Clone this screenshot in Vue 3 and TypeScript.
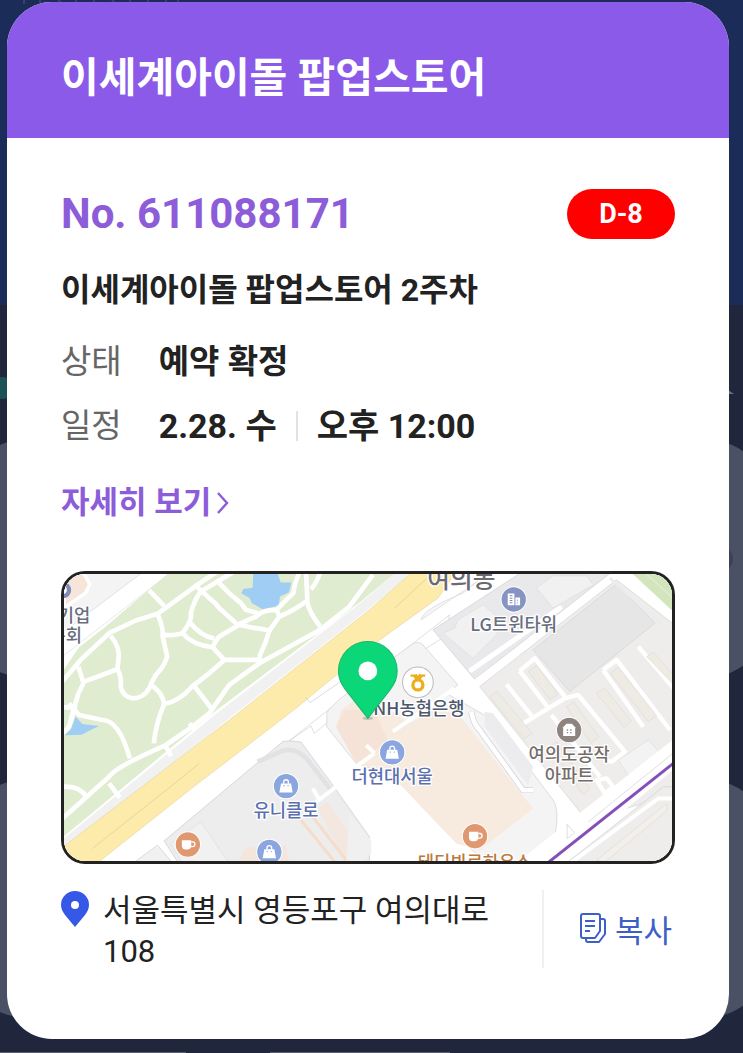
<script setup lang="ts">
interface Place {
  x: number
  y: number
  lines: string[]
  kind: 'office' | 'bank' | 'shop' | 'home' | 'food'
  icon: { x: number; y: number }
}

const reservation = {
  store: '이세계아이돌 팝업스토어',
  number: 'No. 611088171',
  dday: 'D-8',
  title: '이세계아이돌 팝업스토어 2주차',
  status: '예약 확정',
  date: '2.28. 수',
  time: '오후 12:00',
  address: '서울특별시 영등포구 여의대로 108',
}

const places: Place[] = [
  { x: 1392, y: 214, lines: ['LG트윈타워'], kind: 'office', icon: { x: 1392, y: 119 } },
  { x: 1108, y: 466, lines: ['NH농협은행'], kind: 'bank', icon: { x: 1105, y: 367 } },
  { x: 1028, y: 670, lines: ['더현대서울'], kind: 'shop', icon: { x: 1028, y: 577 } },
  { x: 710, y: 772, lines: ['유니클로'], kind: 'shop', icon: { x: 710, y: 678 } },
  { x: 660, y: 960, lines: [], kind: 'shop', icon: { x: 660, y: 875 } },
  { x: 416, y: 940, lines: [], kind: 'food', icon: { x: 416, y: 853 } },
  { x: 1558, y: 604, lines: ['여의도공작', '아파트'], kind: 'home', icon: { x: 1558, y: 510 } },
  { x: 1275, y: 925, lines: ['테디뵈르하우스'], kind: 'food', icon: { x: 1276, y: 828 } },
]

function copyAddress(): void {
  navigator.clipboard?.writeText(reservation.address)
}
</script>

<template>
  <div class="page">
    <svg class="backdrop" viewBox="0 0 743 1053" preserveAspectRatio="none" aria-hidden="true">
      <rect width="743" height="1053" fill="#20273d" />
      <rect width="743" height="305" fill="#1c2c59" />
      <path d="M24 0v4M40 0v3M58 0l4 3M76 0v3M94 0v4M112 0l3 3M130 0v3M148 0v3M166 0v4M178 0v3" stroke="#36426c" stroke-width="2" />
      <ellipse cx="0" cy="388" rx="20" ry="11" fill="#1d5158" />
      <path d="M728 390l6 4h-6z" fill="#6a7080" />
      <rect x="-36" y="440" width="804" height="237" rx="60" fill="#4b5164" />
      <rect x="-36" y="780" width="804" height="237" rx="60" fill="#4b5164" />
      <circle cx="720" cy="559" r="13" fill="#3c4158" />
      <path d="M0 1052h186v1H0zM270 1052h180v1H270z" fill="#5b6072" />
    </svg>

    <main class="card">
      <header class="card-head">
        <h1>{{ reservation.store }}</h1>
      </header>

      <div class="card-body">
        <div class="number-row">
          <p class="number">{{ reservation.number }}</p>
          <span class="badge">{{ reservation.dday }}</span>
        </div>

        <h2>{{ reservation.title }}</h2>

        <dl class="facts">
          <div class="fact">
            <dt>상태</dt>
            <dd>{{ reservation.status }}</dd>
          </div>
          <div class="fact">
            <dt>일정</dt>
            <dd class="schedule">
              <span>{{ reservation.date }}</span>
              <i class="bar"></i>
              <span>{{ reservation.time }}</span>
            </dd>
          </div>
        </dl>

        <a class="more" href="#detail">
          자세히 보기
          <svg width="12" height="24" viewBox="0 0 12 24" aria-hidden="true">
            <path d="M1 2l9 10-9 10" fill="none" stroke="currentColor" stroke-width="2.4" />
          </svg>
        </a>

        <div class="map">
          <svg viewBox="45 42 1821 861" preserveAspectRatio="xMidYMid slice" role="img" aria-label="지도">
            <rect x="0" y="0" width="1900" height="950" fill="#fff" />

            <!-- north-west block -->
            <path d="M0 0H330L45 215H0z" fill="#f4f4f5" stroke="#d4d4dc" stroke-width="2" />
            <path d="M72 41h32l18 32-12 26-64 44V70z" fill="#f8e5da" stroke="#fff" stroke-width="10" />
            <path d="M40 290L360 42" stroke="#dcdce2" stroke-width="2" />

            <!-- park -->
            <path d="M0 395L90 262 170 200 370 30H1050L930 128 500 452 0 865z" fill="#dfeccf" />
            <path d="M1050 30L930 132 500 462 0 872V905L540 475 960 145 1095 30z" fill="#f1f1f1" />
            <path d="M612 38h72l10 30h32l-8 30-26 12-4 28-48 10-32-18-8-16-24-14 6-12 28-4z" fill="#9fcdf3" />
            <path d="M80 470l20 22 50 6-30 14-22 12-50 2 18-18z" fill="#9fcdf3" />
            <g class="trails">
              <path d="M40 365L95 300 180 220 260 182 325 162 440 78 500 38" />
              <path d="M300 92L345 138" />
              <path d="M325 162Q345 210 340 228L354 290Q345 320 320 345 305 370 302 382 285 415 250 415 220 410 215 380 218 350 205 328" />
              <path d="M185 228Q215 265 208 300L205 328 105 365Q90 400 88 400L65 480" />
              <path d="M88 320L102 365" />
              <path d="M340 225Q380 228 400 220 430 180 425 160 435 120 455 95" />
              <path d="M440 78L480 115Q500 130 510 145 545 175 565 195L620 170Q640 150 680 150" />
              <path d="M400 220Q430 255 490 262 500 240 510 230L570 195" />
              <path d="M420 185Q455 230 495 236" />
              <path d="M550 38L455 95" />
              <path d="M510 70L545 105 575 130 590 150 625 160" />
              <path d="M750 38Q735 70 732 100 700 130 682 150L690 170Q730 155 770 125" />
              <path d="M770 38L774 125Q775 150 812 200" />
              <path d="M812 38Q800 75 784 88" />
              <path d="M570 195Q610 205 635 207L660 212Q650 250 632 285L630 310" />
              <path d="M690 170L660 212" />
              <path d="M490 262L525 300H630" />
              <path d="M525 300Q470 350 430 378 390 425 345 432 340 400 310 378M345 432Q320 490 314 550" />
              <path d="M435 378L486 445" />
              <path d="M970 45L900 140 812 210 630 310 540 375 480 460 430 500 350 555Q200 620 180 650L40 775" />
              <path d="M420 490L440 510M350 560L366 588M180 670L212 712" />
              <path d="M60 430L90 465 160 480Q210 480 242 595" />
              <path d="M40 442H78L60 500 40 520" />
              <path d="M40 680Q90 675 112 710" />
            </g>

            <!-- boulevard -->
            <path d="M1200 165l-15 65-140 90-60 10-60 80-130 110-10-22-140 95-45 65-80 50 230-190z" fill="#fff" stroke="#cfcfd6" stroke-width="2" />
            <path d="M45 858L540 480 960 150 1095 30H1225L1165 115 970 255 740 445 440 675 130 920H45z" fill="#fcebab" stroke="#e5d8a8" stroke-width="2" />
            <path d="M130 865L370 675 450 610M1035 145L1165 25" fill="none" stroke="#d8cc98" stroke-width="2" />
            <path d="M1240 100Q1115 150 1115 180L1290 60z" fill="#f5f5f5" stroke="#d4d4d8" stroke-width="2" />
            <path d="M768 412l14 16 90-62" fill="none" stroke="#c9c9d2" stroke-width="2" />

            <!-- south-west block -->
            <path d="M250 910L325 855 372 910z" fill="#f1f1f2" stroke="#ccc" stroke-width="2" />
            <path d="M345 842L700 545Q715 540 755 546L845 668 960 830V920H395z" fill="#ededee" stroke="#c9c9d0" stroke-width="2" />
            <path d="M625 605L700 572Q740 560 775 600L845 690" fill="none" stroke="#e2e2e5" stroke-width="14" />
            <path d="M365 850L455 785 540 910H400z" fill="#f1f1f2" stroke="#dcdcde" stroke-width="2" />
            <path d="M775 745L860 680M790 685L808 715" fill="none" stroke="#fff" stroke-width="12" />
            <path d="M805 745L835 725 930 860 890 910z" fill="#f4e7e0" />
            <path d="M590 860l120-5 10 60H560z" fill="#f4e5dd" />
            <path d="M755 780L860 910M790 770L890 900" stroke="#f6dcc9" stroke-width="9" />

            <!-- department store block -->
            <path d="M832 460Q835 435 1085 255 1105 240 1120 255L1225 375 1190 400 1330 480 1510 720Q1530 745 1515 830L1500 920H1320L1040 650 920 610 832 500z" fill="#f4f4f5" stroke="#cfcfd4" stroke-width="2" />
            <path d="M875 450L945 400 1080 490 1150 455H1220L1450 745 1290 870 1220 850 1020 640 920 610 860 500z" fill="#f7eadf" />
            <path d="M860 500l60 110 95-68-40-92-90 0z" fill="#f6e3d8" />
            <path d="M1215 385L1030 515M950 555L975 580M920 620L975 580" fill="none" stroke="#fff" stroke-width="12" />
            <path d="M1265 455Q1270 490 1290 510L1420 690 1450 690" fill="none" stroke="#cfcfd4" stroke-width="18" />
            <path d="M1265 455Q1270 490 1290 510L1420 690 1450 690" fill="none" stroke="#fff" stroke-width="14" />
            <path d="M1305 455L1330 460 1450 620 1435 675 1305 500z" fill="#ececef" />
            <path d="M1000 680L1180 910" stroke="#fff" stroke-width="14" />
            <path d="M930 650L990 650 1150 910H1100L955 740z" fill="#fff" />
            <path d="M900 760L965 840V880L930 910H890z" fill="#f0f0f0" />

            <!-- twin tower block -->
            <path d="M1150 210L1410 41H1680L1275 358z" fill="#e9e9eb" stroke="#cfcfd4" stroke-width="2" />
            <path d="M1180 220L1215 205 1225 180 1300 135 1360 185 1340 225 1270 295z" fill="#f1f1f2" stroke="#ddd" stroke-width="2" />
            <path d="M1460 85L1510 48H1610L1630 75 1510 145z" fill="#f1f1f2" stroke="#ddd" stroke-width="2" />
            <path d="M1265 330L1530 145" stroke="#fff" stroke-width="15" stroke-linecap="round" />
            <path d="M1275 358L1690 45H1740L1310 380z" fill="#fff" />

            <!-- apartments -->
            <path d="M1290 380L1700 60 1880 200V700L1610 780 1430 555z" fill="#efedec" stroke="#d2d2d4" stroke-width="2" />
            <path d="M1450 270L1700 72 1815 190 1560 395z" fill="#e6e6e7" stroke="#d3d3d5" stroke-width="2" />
            <path d="M1680 55L1880 235" fill="none" stroke="#ececec" stroke-width="8" />
            <g class="lanes">
              <path d="M1405 500L1545 415 1585 405 1725 575 1685 605 1660 600" />
              <path d="M1410 333L1455 295 1545 410M1410 333L1495 443M1370 373L1450 473" />
              <path d="M1660 330L1700 300 1860 510M1660 330L1780 500M1765 260L1875 390" />
              <path d="M1505 465L1650 650M1640 660L1665 700 1690 680 1670 655z" />
            </g>
            <g fill="#eeeae4" stroke="#dedbd8" stroke-width="2">
              <path d="M1435 335l25-18 65 85-24 18zM1680 340l25-18 115 145-25 18zM1790 290l20-14 70 80v28zM1320 410l22-16 105 125-24 18zM1550 440l22-14 75 105-24 18zM1500 560l20-14 100 140-22 16zM1640 400l24-16 80 100-22 18z" />
            </g>
            <path d="M1705 600L1795 540 1850 600 1755 675z" fill="#f3f3f4" stroke="#dcdcdf" stroke-width="2" />
            <path d="M1385 920L1880 530V620L1520 920z" fill="#fff" />
            <path d="M1615 785L1875 575M1552 792v44l22-18z" fill="none" stroke="#cfcfd3" stroke-width="2" />
            <path d="M1535 920L1840 680H1880V920z" fill="#eeedec" stroke="#cfcfd3" stroke-width="2" />
            <path d="M1560 910L1825 715H1875" fill="none" stroke="#fff" stroke-width="12" />
            <path d="M1640 900L1850 730v22L1665 905z" fill="#f3efeb" stroke="#dedbd8" stroke-width="2" />
            <path d="M1485 915L1880 602" stroke="#8250b8" stroke-width="9" />
            <path d="M1735 30L1880 165V30z" fill="#d3e5bd" />
            <path d="M1775 30L1880 125" stroke="#e5eddc" stroke-width="3" />

            <!-- labels -->
            <g class="label office">
              <circle cx="42" cy="91" r="18" fill="#fff" stroke="#7e8bbb" stroke-width="13" />
              <text x="124" y="187" text-anchor="end">기업</text>
              <text x="99" y="247" text-anchor="end">총회</text>
            </g>
            <text class="label district" x="1235" y="84">여의동</text>

            <g v-for="place in places" :key="`${place.icon.x}-${place.icon.y}`" class="label" :class="place.kind">
              <g :transform="`translate(${place.icon.x} ${place.icon.y})`">
                <circle v-if="place.kind === 'bank'" r="46" fill="#fff" stroke="#bbb" stroke-width="3" />
                <circle v-else class="disc" r="38" stroke="#fff" stroke-width="3" />
                <g v-if="place.kind === 'office'">
                  <path d="M-18-18H2V17h-20zM5-6h14v23H5z" fill="#fff" />
                  <path d="M-12-11h8M-12-4h8M-12 3h8M-12 10h8M11 1v3M11 9v3" stroke="#7e8bbb" stroke-width="3" />
                </g>
                <g v-else-if="place.kind === 'bank'" fill="none" stroke="#edae1d">
                  <circle cy="8" r="15" stroke-width="10" />
                  <path d="M-22-20H-12L-3-8M22-20H12L3-8M-7-24L0-12 7-24" stroke-width="7" />
                </g>
                <g v-else-if="place.kind === 'shop'">
                  <path d="M-15-8h30l5 27h-40z" fill="#fff" />
                  <path d="M-7-7v-5q0-7 7-7t7 7v5" fill="none" stroke="#fff" stroke-width="4" />
                  <path d="M-6-3v4M6-3v4" stroke="#8ba5de" stroke-width="3" />
                </g>
                <g v-else-if="place.kind === 'home'">
                  <path d="M-18 18V-8L-8-19H8L18-8v26z" fill="#fff" />
                  <path d="M-7 0h4M3 0h4M-7 8h4M3 8h4" stroke="#8d8480" stroke-width="4" />
                </g>
                <g v-else>
                  <path d="M-18-13h28v16q0 12-12 12h-5q-11 0-11-12z" fill="#fff" />
                  <path d="M10-8h5q6 0 6 7t-7 7h-5" fill="none" stroke="#fff" stroke-width="4" />
                </g>
              </g>
              <text v-for="(line, i) in place.lines" :key="line" :x="place.x" :y="place.y + i * 63">{{ line }}</text>
            </g>

            <ellipse cx="955" cy="475" rx="16" ry="5" fill="#7d8f70" opacity="0.4" />
            <path d="M955 475L888 389Q867 362 867 333A88 88 0 0 1 1043 333Q1043 362 1022 389z" fill="#0bd778" stroke="#18b56b" stroke-width="3" />
            <circle cx="955" cy="333" r="28" fill="#fff" />
          </svg>
        </div>

        <div class="place-row">
          <svg class="place-pin" width="28" height="36" viewBox="0 0 28 36" aria-hidden="true">
            <path fill-rule="evenodd" d="M14 0a14 14 0 0 1 14 14c0 4-2 7-4 10L14 36 4 24c-2-3-4-6-4-10A14 14 0 0 1 14 0zm0 10a4 4 0 1 0 0 8 4 4 0 0 0 0-8z" fill="#3658e6" />
          </svg>
          <address>{{ reservation.address }}</address>
          <button class="copy" type="button" @click="copyAddress">
            <svg width="26" height="30" viewBox="0 0 26 30" fill="none" stroke="currentColor" stroke-width="2" stroke-linejoin="round" aria-hidden="true">
              <path d="M3 1h15q2 0 2 2v15l-5 7H3q-2 0-2-2V3q0-2 2-2z" />
              <path d="M20 6h3q2 0 2 2v13l-6 8H8q-2 0-2-2v-2" />
              <path d="M5 8h10M5 13h10M5 18h5" />
            </svg>
            복사
          </button>
        </div>
      </div>
    </main>
  </div>
</template>

<style>
body {
  margin: 0;
  background: #20273d;
}
</style>

<style scoped>
.page {
  position: relative;
  min-height: 100vh;
  box-sizing: border-box;
  padding: 2px 14px 14px 7px;
  overflow: hidden;
  font-family: Roboto, "Noto Sans CJK KR", sans-serif;
  color: #222;
}
.backdrop {
  position: absolute;
  inset: 0;
  width: 100%;
  height: 100%;
}
.card {
  position: relative;
  overflow: hidden;
  border-radius: 45px;
  background: #fff;
}
.card-head {
  padding: 46px 54px 30px 54px;
  background: #8c5ae8;
}
h1, h2, p, dl, dd {
  margin: 0;
}
h1 {
  font-size: 41px;
  line-height: 60px;
  font-weight: 700;
  color: #fff;
}
.card-body {
  padding: 50px 54px 67px 54px;
}
.number-row {
  display: flex;
  align-items: center;
  justify-content: space-between;
}
.number {
  font-size: 42px;
  line-height: 52px;
  font-weight: 700;
  color: #8c5cd9;
}
.badge {
  min-width: 108px;
  border-radius: 25px;
  background: #fe0000;
  color: #fff;
  font-size: 27px;
  line-height: 50px;
  font-weight: 700;
  text-align: center;
}
h2 {
  margin-top: 28px;
  font-size: 32px;
  line-height: 44px;
  font-weight: 700;
}
.facts {
  display: grid;
  gap: 20px;
  margin-top: 28px;
  font-size: 33px;
  line-height: 44px;
}
.fact {
  display: flex;
  gap: 37px;
}
dt {
  color: #666;
}
dd {
  display: flex;
  align-items: center;
  font-weight: 700;
}
.schedule {
  font-size: 34px;
}
.bar {
  width: 2px;
  height: 30px;
  margin: 0 19px;
  background: #e2e2e6;
}
.more {
  display: flex;
  align-items: center;
  gap: 6px;
  width: fit-content;
  margin-top: 33px;
  font-size: 31px;
  line-height: 44px;
  font-weight: 700;
  color: #8c5cd9;
  text-decoration: none;
}
.map {
  box-sizing: border-box;
  height: 293px;
  margin-top: 46px;
  overflow: hidden;
  border: 3px solid #222;
  border-radius: 24px;
}
.map svg {
  display: block;
  width: 100%;
  height: 100%;
}
.trails {
  fill: none;
  stroke: #fff;
  stroke-width: 14px;
  stroke-linejoin: round;
}
.lanes {
  fill: none;
  stroke: #fff;
  stroke-width: 13px;
  stroke-linejoin: round;
}
.label {
  font-family: "Noto Sans CJK KR", sans-serif;
  font-size: 53px;
  font-weight: 500;
  text-anchor: middle;
}
.label text,
.district {
  paint-order: stroke;
  stroke: #fff;
  stroke-width: 8px;
  stroke-linejoin: round;
}
.district {
  font-size: 74px;
  fill: #6c6a70;
}
.office { fill: #686d80; }
.bank { fill: #4e586d; }
.shop { fill: #5a70ae; }
.home { fill: #746c69; }
.food { fill: #bd793c; }
.office .disc { fill: #8794c2; }
.shop .disc { fill: #8ba5de; }
.home .disc { fill: #8d8480; }
.food .disc { fill: #df9870; }
.place-row {
  display: flex;
  align-items: flex-start;
  margin-top: 26px;
}
.place-pin {
  flex: none;
  margin: 1px 14px 0 0;
}
address {
  flex: 1;
  padding-right: 48px;
  font-size: 31px;
  line-height: 41px;
  font-style: normal;
  word-break: keep-all;
}
.copy {
  display: flex;
  align-items: center;
  gap: 9px;
  height: 78px;
  padding: 0 3px 2px 36px;
  border: 0;
  border-left: 2px solid #f0f0f2;
  background: none;
  color: #3f5fc8;
  font: inherit;
  font-size: 31px;
  cursor: pointer;
}
</style>
